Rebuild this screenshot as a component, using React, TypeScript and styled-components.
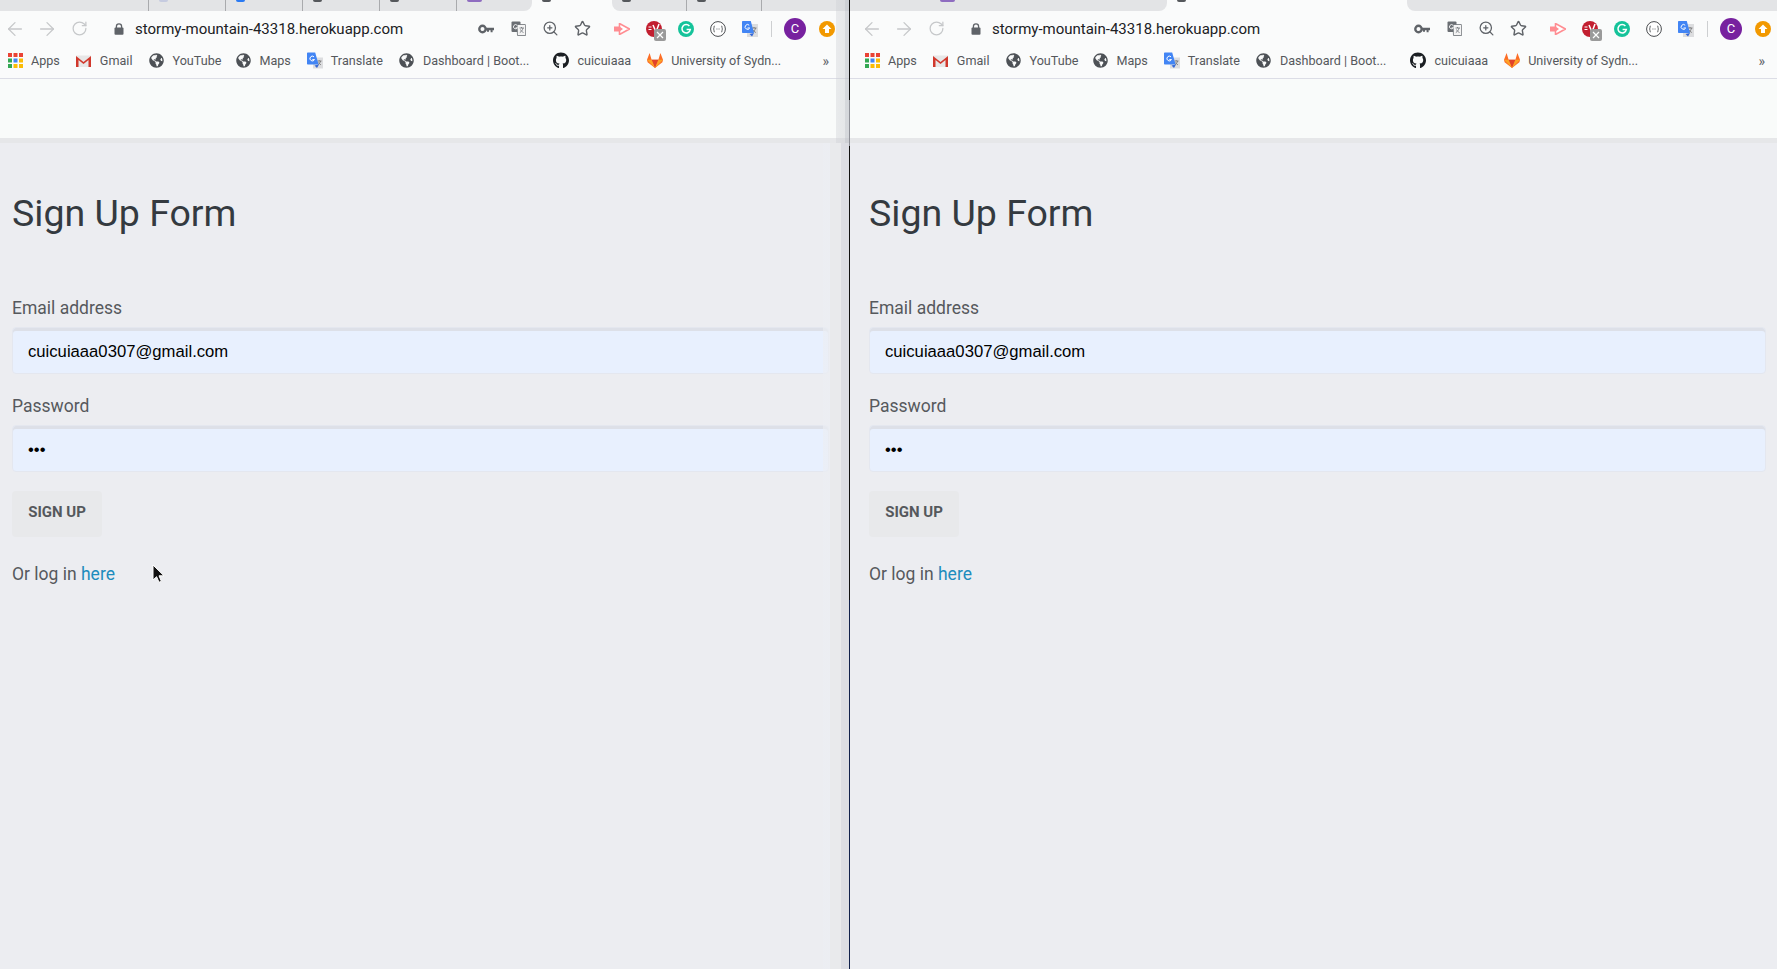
import React from "react";
import styled, { createGlobalStyle } from "styled-components";
import { ArrowLeft, ArrowRight, RotateCw, ZoomIn, Star } from "lucide-react";
import { FaGithub, FaGlobeAmericas } from "react-icons/fa";

const GlobalStyle = createGlobalStyle`
  html, body {
    margin: 0;
    padding: 0;
    background: #ecedf1;
  }
  * {
    box-sizing: border-box;
  }
`;

const Screen = styled.div`
  display: flex;
  width: 1777px;
  height: 969px;
  overflow: hidden;
  font-family: Roboto, "Liberation Sans", sans-serif;
`;

const Divider = styled.div`
  flex: none;
  width: 1px;
  background: linear-gradient(
    to bottom,
    #111 0,
    #111 100px,
    #8d8f96 100px,
    #8d8f96 146px,
    #111 146px,
    #111 600px,
    #10204a 600px,
    #10204a 969px
  );
`;

const Window = styled.div<{ $width: number }>`
  position: relative;
  flex: none;
  display: flex;
  flex-direction: column;
  width: ${(p) => p.$width}px;
  height: 100%;
  overflow: hidden;
  background: #ecedf1;
`;

const TabStrip = styled.div`
  flex: none;
  display: flex;
  height: 11px;
  background: #fafbfb;
`;

const TabGroup = styled.div<{ $side: "left" | "right" }>`
  display: flex;
  height: 100%;
  overflow: hidden;
  background: #e3e4e6;
  flex: ${(p) => (p.$side === "right" ? 1 : "none")};
  border-bottom-right-radius: ${(p) => (p.$side === "left" ? "8px" : 0)};
  border-bottom-left-radius: ${(p) => (p.$side === "right" ? "8px" : 0)};
`;

const Tab = styled.div<{ $width: number; $divider?: boolean }>`
  flex: none;
  display: flex;
  align-items: flex-start;
  width: ${(p) => p.$width}px;
  height: 100%;
  padding-left: 10px;
  border-right: ${(p) => (p.$divider ? "1px solid #a9aaad" : "none")};
`;

const ActiveTab = styled(Tab)`
  background: #fafbfb;
`;

const Favicon = styled.span<{ $color: string; $wide?: boolean }>`
  display: block;
  width: ${(p) => (p.$wide ? 15 : 9)}px;
  height: 2px;
  border-radius: 0 0 3px 3px;
  background: ${(p) => p.$color};
`;

const Toolbar = styled.div<{ $inset: number }>`
  flex: none;
  display: flex;
  align-items: center;
  height: 35px;
  padding-left: ${(p) => p.$inset}px;
  background: #fafbfb;
`;

const NavButton = styled.span`
  display: flex;
  align-items: center;
  justify-content: center;
  width: 30px;
  height: 30px;
  margin-right: 2px;
  color: #c6c8ca;
`;

const LockSlot = styled.span`
  display: flex;
  justify-content: center;
  width: 16px;
  margin: 0 8px 0 15px;
`;

const Url = styled.span`
  font-size: 15px;
  color: #202124;
  white-space: nowrap;
`;

const Actions = styled.div<{ $edge: number }>`
  display: flex;
  align-items: center;
  margin-left: auto;
  margin-right: ${(p) => p.$edge}px;
`;

const ActionSlot = styled.span<{ $gapBefore?: boolean }>`
  position: relative;
  display: flex;
  align-items: center;
  justify-content: center;
  width: 32px;
  height: 32px;
  margin-left: ${(p) => (p.$gapBefore ? 8 : 0)}px;
  color: #5f6368;
`;

const ActionDivider = styled.span`
  width: 1px;
  height: 16px;
  margin: 0 7px 0 5px;
  background: #cdcfd1;
`;

const Avatar = styled.span`
  display: flex;
  align-items: center;
  justify-content: center;
  width: 22px;
  height: 22px;
  border-radius: 50%;
  background: #77219f;
  color: #fff;
  font-size: 13px;
`;

const ExtensionBadge = styled.span`
  position: absolute;
  left: 16px;
  top: 16px;
  display: flex;
  align-items: center;
  justify-content: center;
  width: 12px;
  height: 12px;
  border-radius: 2px;
  background: #9a9a9a;
`;

const BookmarksBar = styled.div<{ $inset: number }>`
  flex: none;
  display: flex;
  align-items: center;
  height: 33px;
  padding-left: ${(p) => p.$inset + 7}px;
  padding-bottom: 3px;
  background: #fafbfb;
  border-bottom: 1px solid #dcdde6;
`;

const Bookmark = styled.span<{ $trail?: number }>`
  display: flex;
  align-items: center;
  gap: 8px;
  margin-right: ${(p) => p.$trail ?? 16}px;
  font-size: 12.6px;
  color: #55585c;
  white-space: nowrap;
`;

const BookmarkIcon = styled.span<{ $color?: string }>`
  display: flex;
  align-items: center;
  justify-content: center;
  width: 16px;
  height: 16px;
  color: ${(p) => p.$color ?? "#4d5156"};
`;

const MoreBookmarks = styled.span<{ $edge: number }>`
  margin-left: auto;
  margin-right: ${(p) => p.$edge + 14}px;
  font-size: 14px;
  color: #5f6368;
`;

const TopBar = styled.header`
  flex: none;
  height: 64px;
  background: #f9fbfa;
  border-bottom: 5px solid #e6e7e9;
`;

const Main = styled.main<{ $left: number; $right: number }>`
  flex: 1;
  padding: 46px ${(p) => p.$right}px 0 ${(p) => p.$left}px;
  background: #ecedf1;
`;

const Title = styled.h1`
  margin: 0 0 59px;
  font-size: 37.5px;
  line-height: 48px;
  font-weight: 400;
  color: #343a40;
`;

const Field = styled.div`
  display: flex;
  flex-direction: column;
  gap: 7px;
  margin-bottom: 20px;
`;

const Label = styled.label`
  font-size: 17.5px;
  line-height: 24px;
  color: #56595d;
`;

const Input = styled.input`
  width: 100%;
  height: 47px;
  padding: 2px 15px 0;
  border: 1px solid #e4e7ef;
  border-radius: 4px;
  outline: none;
  background: #e8f0fe;
  box-shadow: inset 0 3px 0 #dde0e8;
  font-family: "Liberation Sans", Arial, sans-serif;
  font-size: 16.67px;
  color: #000;
`;

const SubmitButton = styled.button`
  display: block;
  width: 90px;
  height: 46px;
  margin-top: -1px;
  padding: 0 0 4px;
  border: none;
  border-radius: 4px;
  background: #e8e9eb;
  font-family: Roboto, sans-serif;
  font-size: 15px;
  font-weight: 700;
  color: #55585c;
`;

const LoginHint = styled.p`
  margin: 25px 0 0;
  font-size: 17.5px;
  line-height: 24px;
  color: #56595d;
`;

const HereLink = styled.a`
  color: #1d8cbd;
  text-decoration: none;
`;

const ScrollFade = styled.div`
  position: absolute;
  top: 0;
  right: 0;
  bottom: 0;
  width: 26px;
  display: flex;
  flex-direction: column;
  pointer-events: none;
`;

const ScrollFadeTop = styled.div`
  flex: none;
  height: 143px;
  margin-left: 13px;
  background: linear-gradient(
    to right,
    rgba(205, 207, 212, 0.38) 0,
    rgba(205, 207, 212, 0.45) 9px,
    rgba(190, 193, 200, 0.6) 9px
  );
`;

const ScrollFadeBody = styled.div`
  flex: 1;
  background: linear-gradient(
    to right,
    rgba(236, 238, 243, 0.65) 0,
    rgba(236, 238, 243, 0.65) 7px,
    #e9eaec 7px,
    #e9eaec 18px,
    #dcdde3 18px
  );
`;

const Cursor = styled.svg`
  position: absolute;
  left: 152px;
  top: 564px;
`;

const BackIcon = () => <ArrowLeft size={22} strokeWidth={1.4} />;
const ForwardIcon = () => <ArrowRight size={22} strokeWidth={1.4} />;
const ReloadIcon = () => <RotateCw size={17} strokeWidth={1.8} />;

const LockIcon = () => (
  <svg width="10" height="12" viewBox="0 0 10 12">
    <path d="M2.4 5V3.4a2.6 2.6 0 0 1 5.2 0V5" fill="none" stroke="#5f6368" strokeWidth="1.3" />
    <rect x="0.5" y="4.6" width="9" height="7.2" rx="1" fill="#5f6368" />
  </svg>
);

const KeyIcon = () => (
  <svg width="16" height="10" viewBox="0 0 16 10">
    <circle cx="4.5" cy="5" r="3.2" fill="none" stroke="#5f6368" strokeWidth="2.4" />
    <path d="M8 3.7h8v2.6h-1.4v2h-2v-2H11v1.4H9V6.3H8z" fill="#5f6368" />
  </svg>
);

const PageTranslateIcon = () => (
  <svg width="15" height="15" viewBox="0 0 15 15">
    <rect x="0.5" y="0.5" width="9" height="10.5" rx="1" fill="#6a6e73" />
    <path d="M6 3.5h8a.6.6 0 0 1 .6.6v10.4H6.5z" fill="#f4f4f4" stroke="#6a6e73" strokeWidth="0.8" />
    <path d="M8.5 7h4.5M10.5 6v1M12 7c-.4 2-1.5 3.6-3.2 4.6M9.5 8.5c.5 1.3 1.6 2.4 3 3" fill="none" stroke="#6a6e73" strokeWidth="0.8" />
    <path d="M6 4.2a2.1 2.1 0 1 0 .4 2.6H4.6" fill="none" stroke="#fff" strokeWidth="0.9" />
  </svg>
);

const ClipperIcon = () => (
  <svg width="16" height="12" viewBox="0 0 16 12">
    <path d="M0 3.5h5.5v5H0z" fill="#ff8d92" />
    <path d="M5.5 0.5 15.5 6l-10 5.5z" fill="#fff" stroke="#ff8d92" strokeWidth="1.6" strokeLinejoin="round" />
    <path d="M5.5 3.5 9 6l-3.5 2.5z" fill="#ff8d92" />
  </svg>
);

const VueCheckIcon = () => (
  <svg width="16" height="16" viewBox="0 0 16 16">
    <circle cx="8" cy="8" r="8" fill="#c21f30" />
    <path d="M7 4l3 7 3-8" fill="none" stroke="#fff" strokeWidth="1.5" />
    <path d="M2.5 6h3M2.5 8.5h3" stroke="#fff" strokeWidth="1" />
  </svg>
);

const BadgeCross = () => (
  <svg width="8" height="8" viewBox="0 0 8 8">
    <path d="M1 1l6 6M7 1L1 7" stroke="#fff" strokeWidth="1.2" />
  </svg>
);

const GrammarlyIcon = () => (
  <svg width="16" height="16" viewBox="0 0 16 16">
    <circle cx="8" cy="8" r="8" fill="#15c39a" />
    <path d="M11.4 5a4.2 4.2 0 1 0 .9 3.6H8.6" fill="none" stroke="#fff" strokeWidth="1.5" />
  </svg>
);

const JsonViewerIcon = () => (
  <svg width="16" height="16" viewBox="0 0 16 16">
    <circle cx="8" cy="8" r="7.4" fill="#fff" stroke="#4a4d50" strokeWidth="1" />
    <path d="M5 5c-1 0-1 .6-1 1.5S3.6 8 3.2 8c.4 0 .8.6.8 1.5S4 11 5 11M11 5c1 0 1 .6 1 1.5s.4 1.5.8 1.5c-.4 0-.8.6-.8 1.5S12 11 11 11" fill="none" stroke="#4a4d50" strokeWidth="0.9" />
    <path d="M6.5 8h.9M8.6 8h.9" stroke="#4a4d50" strokeWidth="0.9" />
  </svg>
);

const GoogleTranslateIcon = () => (
  <svg width="16" height="16" viewBox="0 0 16 16">
    <rect x="5" y="3" width="11" height="13" fill="#dcdddf" />
    <path d="M10 7h4.5M12 6v1M13.5 7c-.4 2-1.5 3.5-3 4.5M11 9c.5 1 1.5 2 2.8 2.5" fill="none" stroke="#777" strokeWidth="0.9" />
    <path d="M.8 0h8L12 12H.8a.8.8 0 0 1-.8-.8V.8A.8.8 0 0 1 .8 0z" fill="#4285f4" />
    <path d="M7.5 13l2.5 2.5L12 12z" fill="#3367d6" />
    <path d="M7.2 4.2a2.4 2.4 0 1 0 .5 2.8H5.500" fill="none" stroke="#fff" strokeWidth="1" />
  </svg>
);

const UpdateIcon = () => (
  <svg width="16" height="16" viewBox="0 0 16 16">
    <circle cx="8" cy="8" r="8" fill="#f29900" />
    <path d="M8 3.5 12.5 8H10v4H6V8H3.500z" fill="#fff" />
  </svg>
);

const AppsIcon = () => {
  const colors = ["#ea4335", "#ea4335", "#ea4335", "#34a853", "#4285f4", "#fbbc05", "#34a853", "#fbbc05", "#fbbc05"];
  return (
    <svg width="15" height="15" viewBox="0 0 15 15">
      {colors.map((color, index) => (
        <rect
          key={index}
          x={(index % 3) * 5.5}
          y={Math.floor(index / 3) * 5.5}
          width="4"
          height="4"
          fill={color}
        />
      ))}
    </svg>
  );
};

const GmailIcon = () => (
  <svg width="15" height="12" viewBox="0 0 15 12">
    <rect x="0" y="0.5" width="15" height="11.5" fill="#e7e7e7" />
    <path d="M0 12V1l7.5 6L15 1v11h-2.5V5L7.5 9 2.5 5v7z" fill="#d1382c" />
  </svg>
);

const GitlabIcon = () => (
  <svg width="16" height="15" viewBox="0 0 16 15">
    <path d="M8 15 .6 9.2 0 6.8 2.600 0l2 6.800h6.800l2-6.800L16 6.800l-.6 2.400z" fill="#fc6d26" />
    <path d="M8 15 4.600 6.800h6.800z" fill="#e24329" />
    <path d="M8 15 0 6.800h4.600zM8 15l8-8.200h-4.600z" fill="#fca326" />
  </svg>
);

const TranslateBookmarkIcon = () => (
  <svg width="17" height="17" viewBox="0 0 16 16">
    <rect x="6" y="5" width="10" height="11" fill="#dcdddf" />
    <path d="M10.500 8.500h4M12.300 7.800v.7M13.600 8.500c-.4 1.700-1.300 3-2.600 3.800M11.500 10c.5 1 1.300 1.800 2.400 2.300" fill="none" stroke="#777" strokeWidth="0.9" />
    <path d="M.8 0h7.400l3.400 12H.8a.8.8 0 0 1-.8-.8V.8A.8.8 0 0 1 .8 0z" fill="#4285f4" />
    <path d="M7.500 13l2.500 2.500L12 12z" fill="#3367d6" />
    <path d="M7 4.300a2.400 2.400 0 1 0 .5 2.800H5.300" fill="none" stroke="#fff" strokeWidth="1" />
  </svg>
);

type TabHint = { width: number; color?: string; wide?: boolean; divider?: boolean };

type BrowserWindowProps = {
  width: number;
  inset: number;
  edge: number;
  contentRight: number;
  tabsBefore: TabHint[];
  activeWidth: number;
  tabsAfter: TabHint[];
  withFade?: boolean;
  withCursor?: boolean;
};

const renderTabs = (tabs: TabHint[]) =>
  tabs.map((tab, index) => (
    <Tab key={index} $width={tab.width} $divider={tab.divider}>
      {tab.color && <Favicon $color={tab.color} $wide={tab.wide} />}
    </Tab>
  ));

const BrowserWindow = ({
  width,
  inset,
  edge,
  contentRight,
  tabsBefore,
  activeWidth,
  tabsAfter,
  withFade,
  withCursor,
}: BrowserWindowProps) => {
  return (
    <Window $width={width}>
      <TabStrip>
        <TabGroup $side="left">{renderTabs(tabsBefore)}</TabGroup>
        <ActiveTab $width={activeWidth}>
          <Favicon $color="#55585c" />
        </ActiveTab>
        <TabGroup $side="right">{renderTabs(tabsAfter)}</TabGroup>
      </TabStrip>

      <Toolbar $inset={inset}>
        <NavButton><BackIcon /></NavButton>
        <NavButton><ForwardIcon /></NavButton>
        <NavButton><ReloadIcon /></NavButton>
        <LockSlot><LockIcon /></LockSlot>
        <Url>stormy-mountain-43318.herokuapp.com</Url>
        <Actions $edge={edge}>
          <ActionSlot><KeyIcon /></ActionSlot>
          <ActionSlot><PageTranslateIcon /></ActionSlot>
          <ActionSlot><ZoomIn size={17} strokeWidth={1.8} /></ActionSlot>
          <ActionSlot><Star size={17} strokeWidth={2} /></ActionSlot>
          <ActionSlot $gapBefore><ClipperIcon /></ActionSlot>
          <ActionSlot>
            <VueCheckIcon />
            <ExtensionBadge><BadgeCross /></ExtensionBadge>
          </ActionSlot>
          <ActionSlot><GrammarlyIcon /></ActionSlot>
          <ActionSlot><JsonViewerIcon /></ActionSlot>
          <ActionSlot><GoogleTranslateIcon /></ActionSlot>
          <ActionDivider />
          <ActionSlot><Avatar>C</Avatar></ActionSlot>
          <ActionSlot><UpdateIcon /></ActionSlot>
        </Actions>
      </Toolbar>

      <BookmarksBar $inset={inset}>
        <Bookmark><BookmarkIcon><AppsIcon /></BookmarkIcon>Apps</Bookmark>
        <Bookmark><BookmarkIcon><GmailIcon /></BookmarkIcon>Gmail</Bookmark>
        <Bookmark $trail={14}><BookmarkIcon><FaGlobeAmericas size={15} /></BookmarkIcon>YouTube</Bookmark>
        <Bookmark><BookmarkIcon><FaGlobeAmericas size={15} /></BookmarkIcon>Maps</Bookmark>
        <Bookmark><BookmarkIcon><TranslateBookmarkIcon /></BookmarkIcon>Translate</Bookmark>
        <Bookmark $trail={24}><BookmarkIcon><FaGlobeAmericas size={15} /></BookmarkIcon>Dashboard | Boot...</Bookmark>
        <Bookmark><BookmarkIcon $color="#1b1f23"><FaGithub size={17} /></BookmarkIcon>cuicuiaaa</Bookmark>
        <Bookmark><BookmarkIcon><GitlabIcon /></BookmarkIcon>University of Sydn...</Bookmark>
        <MoreBookmarks $edge={edge}>»</MoreBookmarks>
      </BookmarksBar>

      <TopBar />

      <Main $left={inset + 12} $right={contentRight}>
        <Title>Sign Up Form</Title>
        <Field>
          <Label>Email address</Label>
          <Input type="email" readOnly value="cuicuiaaa0307@gmail.com" />
        </Field>
        <Field>
          <Label>Password</Label>
          <Input type="password" readOnly value="abc" />
        </Field>
        <SubmitButton>SIGN UP</SubmitButton>
        <LoginHint>
          Or log in <HereLink href="#">here</HereLink>
        </LoginHint>
      </Main>

      {withFade && (
        <ScrollFade>
          <ScrollFadeTop />
          <ScrollFadeBody />
        </ScrollFade>
      )}

      {withCursor && (
        <Cursor width="14" height="20" viewBox="0 0 14 20">
          <path d="M1 1v15l3.6-3.3 2.4 5.6 2.4-1-2.4-5.500H12z" fill="#111" stroke="#fff" strokeWidth="1" />
        </Cursor>
      )}
    </Window>
  );
};

const leftTabsBefore: TabHint[] = [
  { width: 149, divider: true },
  { width: 77, color: "#c6cbe0", divider: true },
  { width: 77, color: "#2a7af3", divider: true },
  { width: 77, color: "#55585c", divider: true },
  { width: 77, color: "#55585c", divider: true },
  { width: 75, color: "#8e6cc0", wide: true },
];

const leftTabsAfter: TabHint[] = [
  { width: 75, color: "#55585c", divider: true },
  { width: 75, color: "#55585c", divider: true },
  { width: 87 },
];

const rightTabsBefore: TabHint[] = [
  { width: 80 },
  { width: 237, color: "#8e6cc0", wide: true },
];

const App = () => {
  return (
    <>
      <GlobalStyle />
      <Screen>
        <BrowserWindow
          width={849}
          inset={0}
          edge={6}
          contentRight={20}
          tabsBefore={leftTabsBefore}
          activeWidth={80}
          tabsAfter={leftTabsAfter}
          withFade
          withCursor
        />
        <Divider />
        <BrowserWindow
          width={927}
          inset={7}
          edge={-2}
          contentRight={11}
          tabsBefore={rightTabsBefore}
          activeWidth={240}
          tabsAfter={[]}
        />
      </Screen>
    </>
  );
};

export default App;
